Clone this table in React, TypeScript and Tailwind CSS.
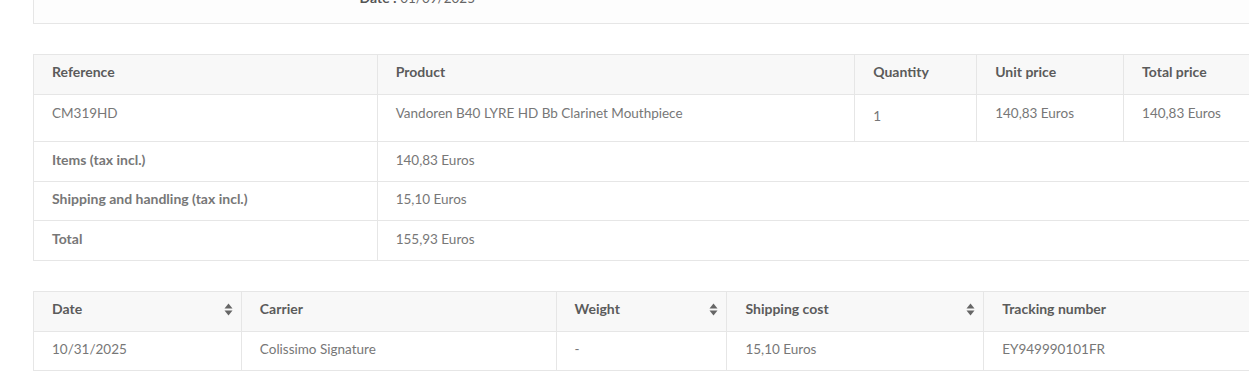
import React from "react";

const SortIcon = () => (
  <svg width="9" height="13" viewBox="0 0 9 13" className="shrink-0">
    <path d="M4.5 0.5 L8.5 5.5 L0.5 5.5 Z" fill="#666" />
    <path d="M4.5 12.5 L8.5 7.5 L0.5 7.5 Z" fill="#666" />
  </svg>
);

const th = "h-[40px] border-r border-[#e6e6e6] bg-[#f8f8f8] px-[18px] pb-[5px] text-left align-middle text-[14px] font-bold text-[#5b5b5b]";
const td = "border-r border-t border-[#e6e6e6] px-[18px] text-left text-[13.5px] text-[#777]";
const lbl = " text-[14px] font-bold text-[#5b5b5b]";

export default function App() {
  return (
    <div className="w-full overflow-hidden bg-white" style={{ height: 392 }}>
      <div className="w-[1260px] pl-[33px] text-[13.5px] leading-[16px]" style={{ fontFamily: "Lato, 'Noto Sans', sans-serif" }}>
        <div className="-mt-[20px] flex h-[44px] items-start border border-[#e6e6e6] bg-[#fdfdfd] pr-4">
          <div className="w-[441px] pt-[9px] text-right text-[#666]">
            <span className="text-[14px] font-bold text-[#555]">Date :</span> 01/09/2025
          </div>
        </div>

        <table className="mt-[30px] w-[1240px] border-collapse border border-[#e6e6e6]">
          <colgroup>
            <col style={{ width: 344 }} />
            <col style={{ width: 478 }} />
            <col style={{ width: 122 }} />
            <col style={{ width: 147 }} />
            <col style={{ width: 149 }} />
          </colgroup>
          <thead>
            <tr>
              <th className={th}>Reference</th>
              <th className={th}>Product</th>
              <th className={th}>Quantity</th>
              <th className={th}>Unit price</th>
              <th className={th}>Total price</th>
            </tr>
          </thead>
          <tbody>
            <tr className="h-[47px]">
              <td className={td + " align-top pt-[10px]"}>CM319HD</td>
              <td className={td + " align-top pt-[10px]"}>Vandoren B40 LYRE HD Bb Clarinet Mouthpiece</td>
              <td className={td + " align-top pt-[13px]"}>1</td>
              <td className={td + " align-top pt-[10px]"}>140,83 Euros</td>
              <td className={td + " align-top pt-[10px]"}>140,83 Euros</td>
            </tr>
            <tr className="h-[40px]">
              <td className={td + " align-middle pb-[4px]" + lbl}>Items (tax incl.)</td>
              <td className={td + " align-middle pb-[4px]"} colSpan={4}>140,83 Euros</td>
            </tr>
            <tr className="h-[39px]">
              <td className={td + " align-middle pb-[4px]" + lbl}>Shipping and handling (tax incl.)</td>
              <td className={td + " align-middle pb-[4px]"} colSpan={4}>15,10 Euros</td>
            </tr>
            <tr className="h-[40px]">
              <td className={td + " align-middle pb-[4px]" + lbl}>Total</td>
              <td className={td + " align-middle pb-[4px]"} colSpan={4}>155,93 Euros</td>
            </tr>
          </tbody>
        </table>

        <table className="mt-[30px] w-[1240px] border-collapse border border-[#e6e6e6]">
          <colgroup>
            <col style={{ width: 208 }} />
            <col style={{ width: 315 }} />
            <col style={{ width: 171 }} />
            <col style={{ width: 257 }} />
            <col style={{ width: 289 }} />
          </colgroup>
          <thead>
            <tr>
              <th className={th}>
                <div className="flex items-center justify-between pr-[8px] -mr-[18px]">
                  <span>Date</span>
                  <SortIcon />
                </div>
              </th>
              <th className={th}>Carrier</th>
              <th className={th}>
                <div className="flex items-center justify-between pr-[8px] -mr-[18px]">
                  <span>Weight</span>
                  <SortIcon />
                </div>
              </th>
              <th className={th}>
                <div className="flex items-center justify-between pr-[8px] -mr-[18px]">
                  <span>Shipping cost</span>
                  <SortIcon />
                </div>
              </th>
              <th className={th}>Tracking number</th>
            </tr>
          </thead>
          <tbody>
            <tr className="h-[39px]">
              <td className={td + " align-middle pb-[4px]"}>10/31/2025</td>
              <td className={td + " align-middle pb-[4px]"}>Colissimo Signature</td>
              <td className={td + " align-middle pb-[4px]"}>-</td>
              <td className={td + " align-middle pb-[4px]"}>15,10 Euros</td>
              <td className={td + " align-middle pb-[4px]"}>EY949990101FR</td>
            </tr>
          </tbody>
        </table>
      </div>
    </div>
  );
}
